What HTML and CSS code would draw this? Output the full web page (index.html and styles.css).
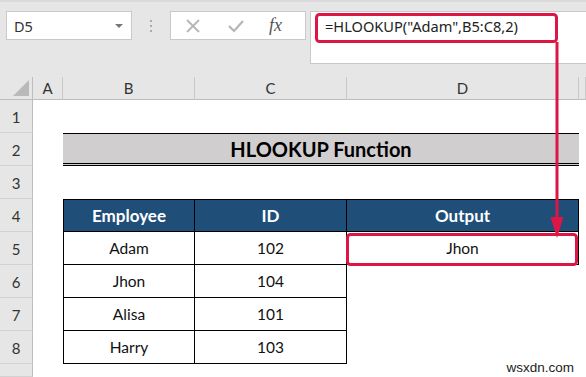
FILE: index.html
```html
<!DOCTYPE html>
<html lang="en">
<head>
<meta charset="UTF-8">
<meta name="viewport" content="width=device-width, initial-scale=1.0">
<title>HLOOKUP Function</title>
<link rel="stylesheet" href="styles.css">
</head>
<body>
<div class="topbar">
<div class="namebox"><span>D5</span><span class="caret"></span></div>
<div class="grip"><i></i><i></i><i></i></div>
<div class="fxbox">
<svg class="ico" width="16" height="16" viewBox="0 0 16 16"><path d="M2 2 L14 14 M14 2 L2 14" stroke="#b5b5b5" stroke-width="1.8" fill="none"/></svg>
<svg class="ico" width="18" height="16" viewBox="0 0 18 16"><path d="M2 8 L7 13 L16 3" stroke="#b5b5b5" stroke-width="2.2" fill="none"/></svg>
<span class="fx">fx</span>
</div>
<div class="formula">=HLOOKUP("Adam",B5:C8,2)</div>
</div>

<div class="sheet">
<div class="corner"><span class="tri"></span></div>
<div class="colhead">A</div>
<div class="colhead">B</div>
<div class="colhead">C</div>
<div class="colhead">D</div>
<div class="colhead"></div>

<div class="rowhead">1</div>
<div></div><div></div><div></div><div></div><div></div>

<div class="rowhead">2</div>
<div></div>
<div class="title">HLOOKUP Function</div>
<div></div>

<div class="rowhead">3</div>
<div></div><div></div><div></div><div></div><div></div>

<div class="rowhead">4</div>
<div></div>
<div class="cell head first">Employee</div>
<div class="cell head">ID</div>
<div class="cell head">Output</div>
<div></div>

<div class="rowhead">5</div>
<div></div>
<div class="cell first">Adam</div>
<div class="cell">102</div>
<div class="cell">Jhon</div>
<div></div>

<div class="rowhead">6</div>
<div></div>
<div class="cell first">Jhon</div>
<div class="cell">104</div>
<div></div><div></div>

<div class="rowhead">7</div>
<div></div>
<div class="cell first">Alisa</div>
<div class="cell">101</div>
<div></div><div></div>

<div class="rowhead">8</div>
<div></div>
<div class="cell first">Harry</div>
<div class="cell">103</div>
<div></div><div></div>

<div class="rowhead"></div>
<div></div><div></div><div></div><div></div><div></div>
</div>

<!-- red callout drawn over the sheet -->
<svg class="callout" width="586" height="377" viewBox="0 0 586 377">
<rect x="316.5" y="14.5" width="240" height="27" rx="3" fill="none" stroke="#dc1746" stroke-width="3"/>
<rect x="347.5" y="234.5" width="229" height="30" rx="3" fill="none" stroke="#dc1746" stroke-width="3"/>
<path d="M557 42 L557 222" stroke="#dc1746" stroke-width="3"/>
<polygon points="550.5,217 563.5,217 557,238" fill="#dc1746"/>
</svg>

<div class="watermark">wsxdn.com</div>
</body>
</html>
```

FILE: styles.css
```css
body { margin: 0; width: 586px; height: 377px; overflow: hidden; background-color: white; font-family: Lato, "Noto Sans", sans-serif; position: relative; }
.topbar { height: 77px; box-sizing: border-box; border-top: 2px solid #dadada; background-color: #e6e6e6; display: flex; align-items: flex-start; padding-top: 9px; }
.namebox { margin-left: 6px; width: 126px; height: 29px; box-sizing: border-box; background-color: white; border: 1px solid #c9c9c9; display: flex; align-items: center; justify-content: space-between; padding: 0 8px 0 7px; font-family: "Noto Sans", sans-serif; font-size: 14.5px; color: #333; }
.caret { width: 0; height: 0; border-left: 4px solid transparent; border-right: 4px solid transparent; border-top: 4px solid #777; }
.grip { width: 38px; height: 29px; display: flex; flex-direction: column; align-items: center; justify-content: center; gap: 3px; }
.grip i { display: block; width: 2px; height: 2px; background-color: #aaa; }
.fxbox { width: 136px; height: 29px; box-sizing: border-box; background-color: white; border: 1px solid #c9c9c9; display: flex; align-items: center; padding-left: 14px; gap: 26px; }
.fxbox .ico { display: block; }
.fx { font-family: "Liberation Serif", serif; font-style: italic; font-size: 18px; color: #555; margin-left: -2px; }
.formula { margin-left: 4px; flex: 1; height: 53px; box-sizing: border-box; background-color: white; border: 1px solid #c9c9c9; border-right: none; padding: 4px 0 0 14px; font-family: "Noto Sans", sans-serif; font-size: 14.6px; color: #222; }
.sheet { display: grid; grid-template-columns: 33px 30px 132px 152px 232px 7px; grid-template-rows: 23px repeat(8, 33px) 13px; }
.sheet > div { box-sizing: border-box; }
.corner { background-color: #e6e6e6; border-right: 1px solid #bdbdbd; border-bottom: 1px solid #bdbdbd; display: flex; align-items: flex-end; justify-content: flex-end; padding: 0 3px 3px 0; }
.tri { width: 0; height: 0; border-left: 16px solid transparent; border-bottom: 16px solid #b9b9b9; }
.colhead { background-color: #e6e6e6; border-right: 1px solid #c9c9c9; border-bottom: 1px solid #bdbdbd; display: flex; align-items: center; justify-content: center; font-size: 15px; color: #333; }
.rowhead { background-color: #e6e6e6; border-right: 1px solid #bdbdbd; border-bottom: 1px solid #d2d2d2; display: flex; align-items: center; justify-content: center; font-size: 15px; color: #333; padding-top: 2px; }
.title { grid-column: span 3; background-color: #d0cece; border-top: 1px solid #000; border-bottom: 3px double #000; display: flex; align-items: center; justify-content: center; font-weight: bold; font-size: 20px; color: #000; }
.cell { border-right: 1px solid #000; border-bottom: 1px solid #000; display: flex; align-items: center; justify-content: center; font-size: 15.5px; color: #111; }
.cell.first { border-left: 1px solid #000; }
.cell.head { background-color: #1f4e79; border-top: 1px solid #000; color: white; font-weight: bold; font-size: 17px; }
.callout { position: absolute; left: 0; top: 0; pointer-events: none; }
.watermark { position: absolute; right: 12px; bottom: 2px; font-family: "Liberation Sans", sans-serif; font-size: 13.5px; color: #222; }
```
